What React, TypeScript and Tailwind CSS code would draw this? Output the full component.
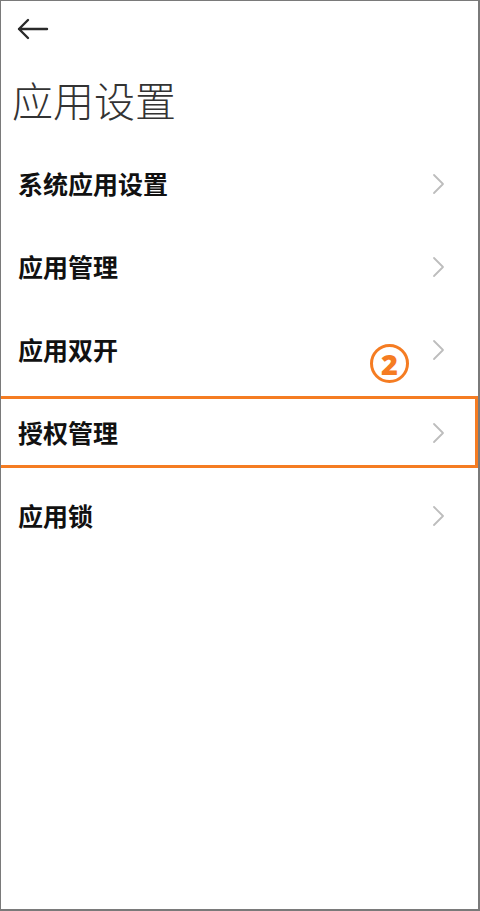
import React from "react";

const font = { fontFamily: '"Noto Sans CJK SC", "Noto Sans", sans-serif' };

function Chevron() {
  return (
    <svg width="14" height="22" viewBox="0 0 14 22" fill="none" className="shrink-0">
      <path d="M2 2 L11 11 L2 20" stroke="#bdbdbd" strokeWidth="1.8" strokeLinecap="round" strokeLinejoin="round" />
    </svg>
  );
}

const items = ["系统应用设置", "应用管理", "应用双开", "授权管理", "应用锁"];

export default function App() {
  return (
    <div
      className="w-[480px] h-[911px] bg-white border-t border-l border-b-2 border-r-2 border-[#7a7a7a] box-border overflow-hidden"
      style={font}
    >
      <div className="h-[55px] flex items-center pl-[16px]">
        <svg width="32" height="22" viewBox="0 0 32 22" fill="none">
          <path d="M2 11 H30 M11 2 L2 11 L11 20" stroke="#2a2a2a" strokeWidth="2.4" strokeLinecap="round" strokeLinejoin="round" />
        </svg>
      </div>
      <div className="pt-[15px] pb-[15px] pl-[11px] h-[86px] box-border">
        <div className="text-[41px] leading-[56px] font-light text-[#333]">应用设置</div>
      </div>
      <div className="flex flex-col">
        {items.map((t, i) => (
          <div key={t} className="relative h-[83px] flex items-center justify-between pl-[17px] pr-[32px]">
            <span className="text-[25px] font-bold text-[#111] leading-none">{t}</span>
            <Chevron />
            {i === 2 && (
              <div className="absolute right-[69px] bottom-[8px] w-[39px] h-[39px] rounded-full border-[3px] border-[#f57c22] flex items-center justify-center">
                <span className="text-[29px] font-black text-[#f57c22] leading-none" style={{ fontFamily: '"Noto Sans", "Liberation Sans", sans-serif' }}>2</span>
              </div>
            )}
            {i === 3 && (
              <div className="absolute left-0 right-0 top-[5px] bottom-[6px] border-y-[3px] border-r-[3px] border-l-0 border-[#f57c22]" />
            )}
          </div>
        ))}
      </div>
    </div>
  );
}
